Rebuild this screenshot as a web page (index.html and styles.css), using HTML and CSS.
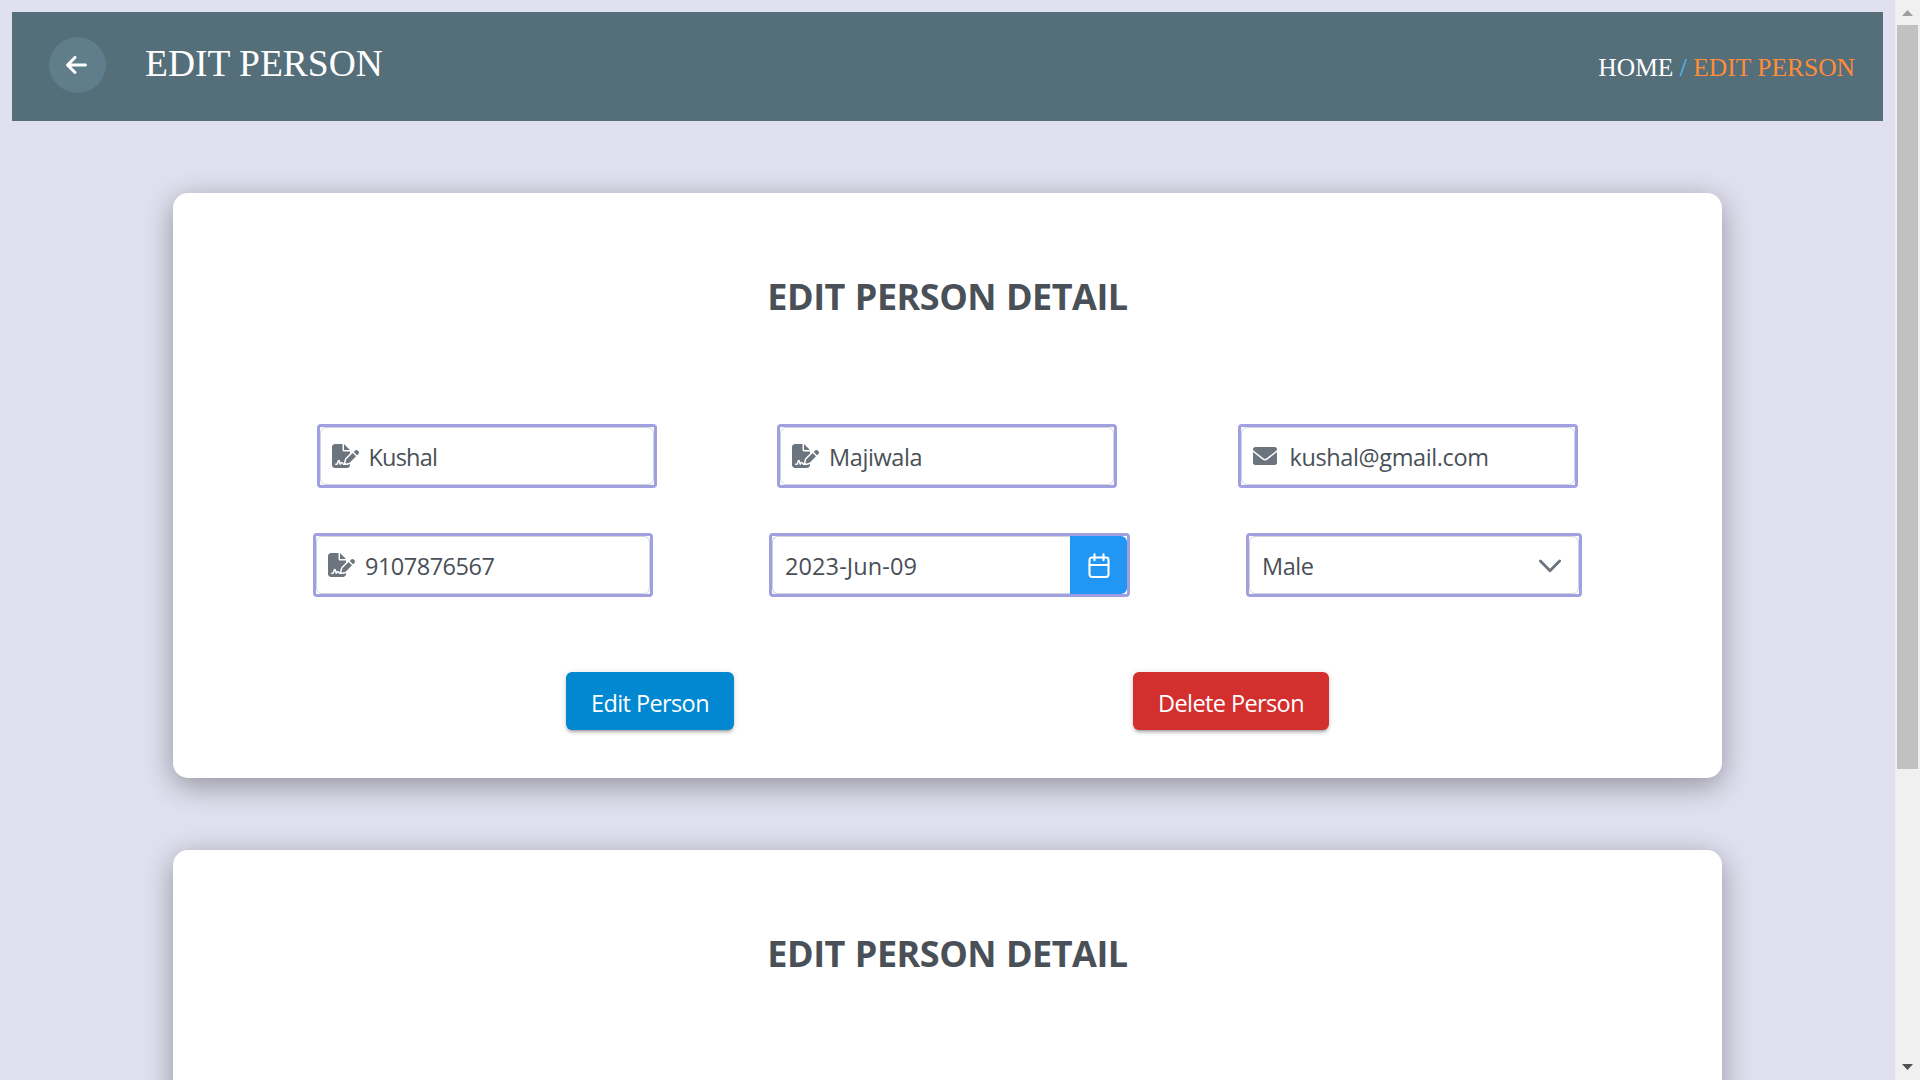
FILE: index.html
```html
<!DOCTYPE html>
<html lang="en">
<head>
<meta charset="utf-8">
<title>Edit Person</title>
<link rel="stylesheet" href="styles.css">
</head>
<body>
<svg width="0" height="0" class="sprite">
  <symbol id="signature" viewBox="0 0 576 512"><path d="M64 0C28.7 0 0 28.7 0 64V448c0 35.3 28.7 64 64 64H320c35.3 0 64-28.7 64-64V428.7c-2.7 1.1-5.4 2-8.2 2.7l-60.1 15c-3 .7-6 1.2-9 1.4c-.9 .1-1.8 .2-2.7 .2H240c-6.1 0-11.6-3.4-14.3-8.8l-8.8-17.7c-1.7-3.4-5.1-5.5-8.8-5.5s-7.2 2.1-8.8 5.5l-8.8 17.7c-2.9 5.9-9.2 9.4-15.7 8.8s-12.1-5.1-13.9-11.3L144 381l-9.8 32.8c-6.1 20.3-24.8 34.2-46 34.2H80c-8.8 0-16-7.2-16-16s7.2-16 16-16h8.2c7.1 0 13.3-4.6 15.3-11.4l14.9-49.5c3.4-11.3 13.8-19.1 25.6-19.1s22.2 7.8 25.6 19.1l11.6 38.6c7.4-6.2 16.8-9.7 26.8-9.7c15.9 0 30.4 9 37.5 23.2l4.4 8.8h8.9c-3.1-8.8-3.7-18.4-1.4-27.8l15-60.1c2.8-11.3 8.6-21.5 16.8-29.7L384 203.6V160H256c-17.7 0-32-14.3-32-32V0H64zM256 0V128H384L256 0zM549.8 139.7c-15.6-15.6-40.9-15.6-56.6 0l-29.4 29.4 71 71 29.4-29.4c15.6-15.6 15.6-40.9 0-56.6l-14.4-14.4zM311.9 321c-4.1 4.1-7 9.2-8.4 14.9l-15 60.1c-1.4 5.5 .2 11.2 4.2 15.2s9.7 5.6 15.2 4.2l60.1-15c5.6-1.4 10.8-4.3 14.9-8.4L512.1 262.7l-71-71L311.9 321z"/></symbol>
</svg>
<div class="page">
  <main class="content">
    <header class="topbar">
      <button class="back" aria-label="Back">
        <svg width="21" height="24" viewBox="0 0 448 512"><path d="M447.1 256C447.1 273.7 432.8 288 415.1 288H109.3l105.4 105.4c12.5 12.5 12.5 32.75 0 45.25C208.4 444.9 200.2 448 192 448s-16.38-3.125-22.62-9.375l-160-160c-12.5-12.5-12.5-32.75 0-45.25l160-160c12.5-12.5 32.75-12.5 45.25 0s12.5 32.75 0 45.25L109.3 224H416C433.7 224 447.1 238.3 447.1 256z"/></svg>
      </button>
      <h1 class="title">EDIT PERSON</h1>
      <nav class="crumbs"><span class="home">HOME</span> <span class="slash">/</span> <span class="current">EDIT PERSON</span></nav>
    </header>

    <section class="card">
      <h2 class="heading">EDIT PERSON DETAIL</h2>
      <div class="row names">
        <div class="field"><div class="input"><svg class="icon sign"><use href="#signature"/></svg><span class="value first">Kushal</span></div></div>
        <div class="field"><div class="input"><svg class="icon sign"><use href="#signature"/></svg><span class="value last">Majiwala</span></div></div>
        <div class="field"><div class="input"><svg class="icon mail" viewBox="0 0 512 512"><path d="M256 352c-16.53 0-33.06-5.422-47.16-16.41L0 173.2V400C0 426.5 21.49 448 48 448h416c26.51 0 48-21.49 48-48V173.2l-208.8 162.5C289.1 346.6 272.5 352 256 352zM16.29 145.3l212.2 165.1c16.19 12.6 38.87 12.6 55.06 0l212.2-165.1C505.1 137.3 512 125 512 112C512 85.49 490.5 64 464 64h-416C21.49 64 0 85.49 0 112C0 125 6.01 137.3 16.29 145.3z"/></svg><span class="value email">kushal@gmail.com</span></div></div>
      </div>
      <div class="row details">
        <div class="field"><div class="input"><svg class="icon sign"><use href="#signature"/></svg><span class="value phone">9107876567</span></div></div>
        <div class="field date">
          <div class="input"><span class="value day">2023-Jun-09</span></div>
          <button class="picker" aria-label="Choose date">
            <svg width="22" height="26" viewBox="0 0 22 26"><rect x="1.5" y="4.5" width="19" height="19.5" rx="2.4"/><path d="M1.5 12h19M6.5 1.200v6M15.500 1.200v6"/></svg>
          </button>
        </div>
        <div class="field gender">
          <div class="input"><span class="value sex">Male</span><svg class="chevron" width="22" height="14" viewBox="0 0 22 14"><path d="M1.4 2L11 11.8l9.600-9.800"/></svg></div>
        </div>
      </div>
      <div class="actions">
        <button class="btn edit">Edit Person</button>
        <button class="btn delete">Delete Person</button>
      </div>
    </section>

    <section class="card">
      <h2 class="heading">EDIT PERSON DETAIL</h2>
    </section>
  </main>
  <aside class="scrollbar">
    <svg class="arrow up" width="11" height="6" viewBox="0 0 11 6"><path d="M5.500 0L11 6H0z"/></svg>
    <div class="thumb"></div>
    <svg class="arrow down" width="11" height="6" viewBox="0 0 11 6"><path d="M0 0h11L5.500 6z"/></svg>
  </aside>
</div>
</body>
</html>
```
FILE: styles.css
```css
* { box-sizing: border-box; }

body {
  margin: 0;
  background: #e1e0f0;
  color: #495057;
  font-family: "Open Sans", "Noto Sans", sans-serif;
  overflow: hidden;
}

button {
  margin: 0;
  padding: 0;
  border: 0;
  font-family: inherit;
}

.sprite { display: none; }

.page {
  display: flex;
  width: 1920px;
  height: 1080px;
  overflow: hidden;
}

.content {
  width: 1895px;
  padding: 12px;
}

.topbar {
  display: flex;
  align-items: flex-start;
  height: 109px;
  padding: 0 28px 0 37px;
  background: #546e7a;
  color: #fff;
  font-family: "Liberation Serif", serif;
}

.back {
  display: flex;
  align-items: center;
  justify-content: center;
  width: 57px;
  height: 56px;
  margin-top: 25px;
  padding-right: 2px;
  border-radius: 50%;
  background: #607d8b;
  fill: #fff;
}

.title {
  margin: 32px auto 0 39px;
  font-size: 37.5px;
  line-height: 40px;
  font-weight: 400;
}

.crumbs {
  margin-top: 41px;
  font-size: 25.5px;
  line-height: 30px;
  white-space: nowrap;
}

.slash { color: #4fc3f7; }
.current { color: #ff8c39; }

.card {
  width: 1549px;
  height: 585px;
  margin: 72px auto 0;
  border-radius: 15px;
  background: #fff;
  box-shadow: 0 7.5px 30px rgba(0, 0, 0, .35);
}

.heading {
  margin: 0;
  padding-top: 79px;
  font-size: 36px;
  line-height: 50px;
  font-weight: 700;
  letter-spacing: -.5px;
  word-spacing: 1px;
  text-align: center;
}

.row {
  display: flex;
  justify-content: center;
}

.names { gap: 120.5px; margin-top: 102px; padding-right: 1px; }
.details { gap: 116px; margin-top: 45px; }

.field {
  display: flex;
  width: 340px;
  height: 64px;
  padding: 3px;
  border-radius: 4px;
  background: #fff;
  box-shadow: inset 0 0 0 3px #a09fdf;
}

.input {
  display: flex;
  flex: 1;
  align-items: center;
  border: 1px solid #ced4da;
  border-radius: 6px;
  padding: 2px 11px 0;
  font-size: 23.5px;
}

.icon {
  flex: none;
  height: 24px;
  margin-top: -3px;
  fill: #6c757d;
}

.sign { width: 27px; margin-right: 10px; }
.mail { width: 24px; margin-right: 13px; }

.value { line-height: 32px; }
.first { letter-spacing: -.8px; }
.last { letter-spacing: -.4px; }
.email { letter-spacing: -.38px; }
.phone { letter-spacing: -.5px; }
.day { letter-spacing: .1px; }
.sex { letter-spacing: -.5px; }

.date { width: 361px; }
.date .input {
  padding-left: 12px;
  border-right: 0;
  border-radius: 6px 0 0 6px;
}

.picker {
  display: flex;
  align-items: center;
  justify-content: center;
  width: 57px;
  padding-top: 2px;
  border-radius: 0 6px 6px 0;
  background: #2196f3;
  fill: none;
  stroke: #fff;
  stroke-width: 2.1;
  stroke-linecap: round;
}

.gender { width: 336px; }
.gender .input {
  justify-content: space-between;
  padding: 2px 17px 0 12px;
}

.chevron {
  fill: none;
  stroke: #6c757d;
  stroke-width: 2.8;
  stroke-linecap: round;
  stroke-linejoin: round;
}

.actions {
  display: flex;
  justify-content: center;
  gap: 399px;
  margin-top: 75px;
}

.btn {
  height: 58px;
  border-radius: 6px;
  color: #fff;
  font-size: 23.5px;
  line-height: 32px;
  padding-top: 3px;
  letter-spacing: -.6px;
  box-shadow: 0 4px 2px -3px rgba(0, 0, 0, .2), 0 3px 3px rgba(0, 0, 0, .14), 0 1px 7px rgba(0, 0, 0, .12);
}

.edit { width: 168px; background: #0288d1; }
.delete { width: 196px; background: #d32f2f; }

.scrollbar {
  display: flex;
  flex-direction: column;
  align-items: center;
  width: 25px;
  padding: 10px 0;
  background: #f0f0f0;
}

.arrow { flex: none; }
.up { fill: #a0a0a0; }
.down { margin-top: auto; fill: #505050; }

.thumb {
  width: 21px;
  height: 744px;
  margin-top: 9px;
  background: #c1c1c1;
}
```
